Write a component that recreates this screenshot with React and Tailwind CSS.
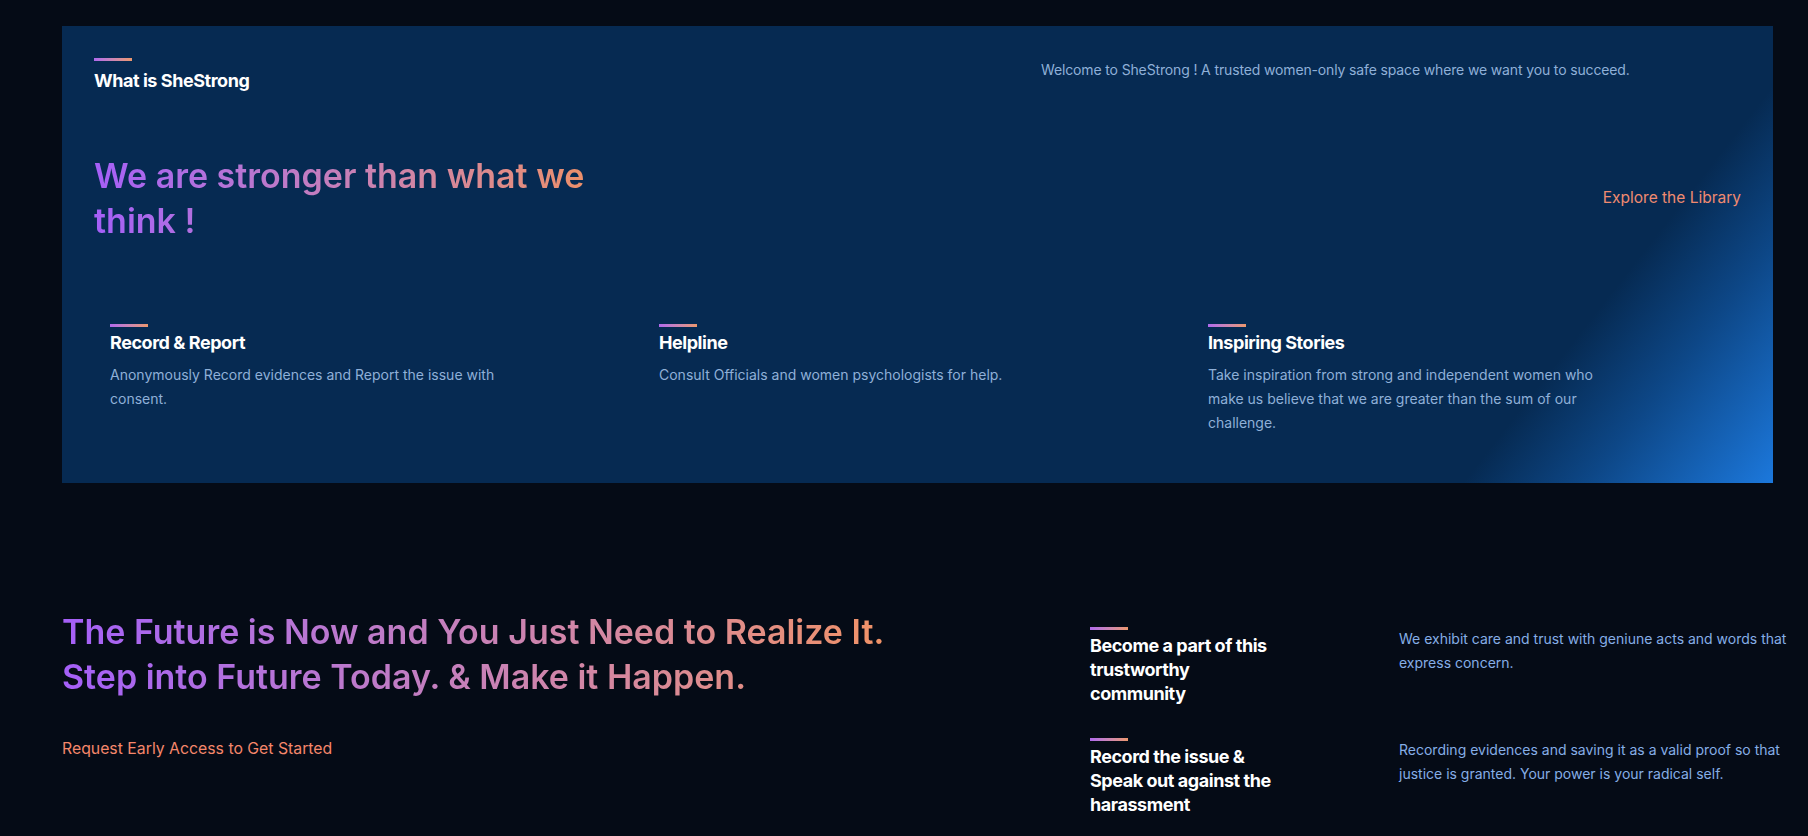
import React from "react";

const Accent = () => (
  <div className="h-[3px] w-[38px] bg-gradient-to-r from-[#b169ec] to-[#ec976c]" />
);

const features = [
  {
    title: "Record & Report",
    text: "Anonymously Record evidences and Report the issue with consent.",
  },
  {
    title: "Helpline",
    text: "Consult Officials and women psychologists for help.",
  },
  {
    title: "Inspiring Stories",
    text: "Take inspiration from strong and independent women who make us believe that we are greater than the sum of our challenge.",
  },
];

const points = [
  {
    title: "Become a part of this trustworthy community",
    text: "We exhibit care and trust with geniune acts and words that express concern.",
  },
  {
    title: "Record the issue & Speak out against the harassment",
    text: "Recording evidences and saving it as a valid proof so that justice is granted. Your power is your radical self.",
  },
];

const App = () => {
  return (
    <div className="min-h-screen bg-[#050b16] pt-[26px] font-['Inter',sans-serif]">
      {/* About panel */}
      <section className="ml-[62px] mr-[35px] bg-[#062a52] bg-[linear-gradient(128deg,#062a52_0%,#062a52_85%,#0d4787_91%,#1c78dc_100%)]">
        <div className="px-8 pt-8 pb-12">
          <div className="flex justify-between">
            <div>
              <Accent />
              <h2 className="mt-2 text-lg font-bold leading-6 tracking-tight text-white">
                What is SheStrong
              </h2>
              <h1 className="mt-[60px] w-[500px] bg-gradient-to-r from-[#a55ff8] to-[#ee9066] bg-clip-text text-[34px] font-semibold leading-[45px] text-transparent">
                We are stronger than what we think !
              </h1>
            </div>
            <div className="flex w-[700px] flex-col">
              <p className="text-[14px] leading-6 tracking-[-0.01em] text-[#8fb0d8]">
                Welcome to SheStrong ! A trusted women-only safe space where we
                want you to succeed.
              </p>
              <a
                href="#"
                className="mt-[104px] self-end text-[15.5px] leading-6 text-[#f08a70]"
              >
                Explore the Library
              </a>
            </div>
          </div>

          <div className="mt-[81px] grid grid-cols-3">
            {features.map((f) => (
              <div key={f.title} className="px-4">
                <Accent />
                <h3 className="mt-1 text-lg font-bold leading-6 tracking-tight text-white">
                  {f.title}
                </h3>
                <p className="mt-2 max-w-[400px] text-[14px] leading-6 text-[#8fb0d8]">
                  {f.text}
                </p>
              </div>
            ))}
          </div>
        </div>
      </section>

      {/* Call to action */}
      <section className="mt-[126px] flex pl-[62px]">
        <div className="w-[1028px] shrink-0">
          <h2 className="w-fit bg-gradient-to-r from-[#a55ff8] to-[#f09266] bg-clip-text text-[34px] font-semibold leading-[45px] text-transparent">
            The Future is Now and You Just Need to Realize It.
            <br />
            Step into Future Today. &amp; Make it Happen.
          </h2>
          <a
            href="#"
            className="mt-[38px] block text-[15.8px] leading-6 text-[#f5876b]"
          >
            Request Early Access to Get Started
          </a>
        </div>

        <div className="mt-[18px] flex flex-col gap-8">
          {points.map((p) => (
            <div key={p.title} className="flex">
              <div className="w-[309px] shrink-0">
                <Accent />
                <h3 className="mt-1 w-[185px] text-lg font-bold leading-6 tracking-tight text-white">
                  {p.title}
                </h3>
              </div>
              <p className="max-w-[400px] text-[14px] leading-6 text-[#86aee6]">
                {p.text}
              </p>
            </div>
          ))}
        </div>
      </section>
    </div>
  );
};

export default App;
